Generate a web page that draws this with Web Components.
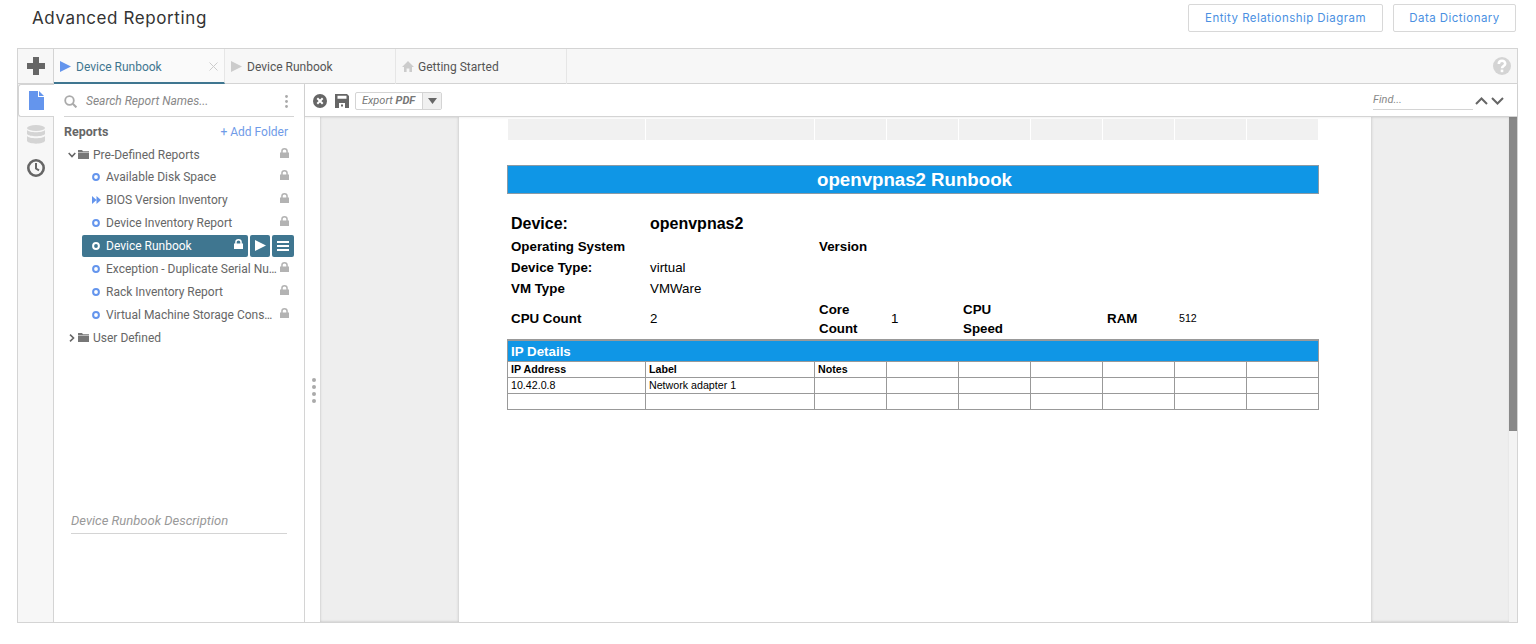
<!DOCTYPE html>
<html>
<head>
<meta charset="utf-8">
<title>Advanced Reporting</title>
<style>
html, body { margin: 0; height: 100%; background: #fff; overflow: hidden; }
body { font-family: Roboto, "Liberation Sans", sans-serif; }
</style>
</head>
<body>
<app-header></app-header>
<report-frame></report-frame>

<script>
const ICONS = {
    plus: '<svg width="20" height="20" viewBox="0 0 20 20"><path fill="#666" d="M7 1h6v6h6v6h-6v6H7v-6H1V7h6z"/></svg>',
    play: c => `<svg width="11" height="11" viewBox="0 0 11 11"><path fill="${c}" d="M0 0l11 5.500L0 11z"/></svg>`,
    home: '<svg width="12" height="11" viewBox="0 0 12 11"><path fill="#ccc" d="M6 0l6 6h-2v5H7.400V7.500H4.600V11H2V6H0z"/></svg>',
    close: '<svg width="9" height="9" viewBox="0 0 9 9"><path stroke="#ccc" stroke-width="1" fill="none" d="M.5.5l8 8M8.500.5l-8 8"/></svg>',
    help: '<svg width="18" height="18" viewBox="0 0 18 18"><circle cx="9" cy="9" r="9" fill="#d4d4d4"/><path fill="none" stroke="#fff" stroke-width="2.600" d="M5.800 7c0-4.200 6.400-4.200 6.400-.3 0 2.300-3.200 2.300-3.200 4.500"/><rect x="7.700" y="12.600" width="2.600" height="2.600" fill="#fff"/></svg>',
    file: '<svg width="15" height="19" viewBox="0 0 15 19"><path fill="#6495ed" d="M0 0h9v6h6v13H0z"/><path fill="#6495ed" d="M10 0l5 5h-5z"/></svg>',
    db: '<svg width="18" height="19" viewBox="0 0 18 19"><g fill="#d4d4d4"><ellipse cx="9" cy="3" rx="9" ry="3"/><path d="M0 5c2 3 16 3 18 0v4c-2 3-16 3-18 0z"/><path d="M0 11c2 3 16 3 18 0v5c-2 3.500-16 3.500-18 0z"/></g></svg>',
    clock: '<svg width="18" height="18" viewBox="0 0 18 18"><circle cx="9" cy="9" r="7.700" fill="none" stroke="#666" stroke-width="2.600"/><path fill="none" stroke="#666" stroke-width="2" d="M9 4v5.500l3 1.800"/></svg>',
    search: '<svg width="13" height="13" viewBox="0 0 13 13"><circle cx="5.500" cy="5.500" r="4.300" fill="none" stroke="#aaa" stroke-width="1.800"/><path stroke="#aaa" stroke-width="2" d="M8.800 8.800l3.600 3.600"/></svg>',
    dots: '<svg width="3" height="13" viewBox="0 0 3 13"><g fill="#aaa"><circle cx="1.500" cy="1.500" r="1.400"/><circle cx="1.500" cy="6.500" r="1.400"/><circle cx="1.500" cy="11.500" r="1.400"/></g></svg>',
    lock: c => `<svg width="9" height="10" viewBox="0 0 9 10"><path fill="${c}" d="M0 4.500h1.200V3a3.300 3 0 0 1 6.600 0v1.500H9V10H0zM2.700 4.500h3.600V3a1.800 1.600 0 0 0-3.600 0z"/></svg>`,
    folder: '<svg width="11" height="9" viewBox="0 0 11 9"><path fill="#777" d="M0 0h4l1 1.200h6V2.400H0zM0 3h11v6H0z"/></svg>',
    down: '<svg width="8" height="6" viewBox="0 0 8 6"><path fill="none" stroke="#666" stroke-width="1.600" d="M.7 1l3.300 3.500L7.300 1"/></svg>',
    right: '<svg width="6" height="8" viewBox="0 0 6 8"><path fill="none" stroke="#666" stroke-width="1.600" d="M1 .7l3.500 3.300L1 7.300"/></svg>',
    ring: c => `<svg width="8" height="8" viewBox="0 0 8 8"><circle cx="4" cy="4" r="2.900" fill="none" stroke="${c}" stroke-width="2"/></svg>`,
    ffwd: '<svg width="9" height="8" viewBox="0 0 9 8"><path fill="#6495ed" d="M0 0l4.500 4L0 8zM4.500 0L9 4 4.500 8z"/></svg>',
    menu: '<svg width="12" height="10" viewBox="0 0 12 10"><path fill="#fff" d="M0 0h12v2H0zM0 4h12v2H0zM0 8h12v2H0z"/></svg>',
    cancel: '<svg width="14" height="14" viewBox="0 0 14 14"><circle cx="7" cy="7" r="7" fill="#666"/><path stroke="#fff" stroke-width="2" d="M4.300 4.300l5.400 5.400M9.700 4.300l-5.400 5.400"/></svg>',
    save: '<svg width="14" height="14" viewBox="0 0 14 14"><path fill="#666" fill-rule="evenodd" d="M0 0h12l2 2v12H0zM2.500 1.800v3h9v-3zM4 9v5h6V9z"/><rect x="6" y="10.500" width="2" height="2" fill="#666"/></svg>',
    caret: '<svg width="9" height="6" viewBox="0 0 9 6"><path fill="#666" d="M0 0h9L4.500 6z"/></svg>',
    up2: '<svg width="13" height="8" viewBox="0 0 13 8"><path fill="none" stroke="#666" stroke-width="2" d="M1 7l5.500-5.500L12 7"/></svg>',
    down2: '<svg width="13" height="8" viewBox="0 0 13 8"><path fill="none" stroke="#666" stroke-width="2" d="M1 1l5.500 5.500L12 1"/></svg>'
};

// Page title and the two link buttons
class AppHeader extends HTMLElement {
    constructor() {
        super();
        this.attachShadow({ mode: 'open' });
        this.shadowRoot.innerHTML = `
            <style>
            :host { display: flex; align-items: flex-start; justify-content: space-between; height: 48px; box-sizing: border-box; padding: 4px 20px 0 32px; }
            h1 { margin: 0; font: 400 17px/28px Inter, sans-serif; letter-spacing: .6px; color: #333; }
            .btns { display: flex; gap: 10px; }
            a { box-sizing: border-box; height: 28px; border: 1px solid #d8d8d8; border-radius: 2px; font: 400 11.500px/26px Inter, sans-serif; letter-spacing: .45px; color: #4a90e2; text-align: center; }
            .erd { width: 195px; }
            .dict { width: 123px; }
            </style>
            <h1>Advanced Reporting</h1>
            <div class="btns"><a class="erd">Entity Relationship Diagram</a><a class="dict">Data Dictionary</a></div>
        `;
    }
}
customElements.define('app-header', AppHeader);

class TabItem extends HTMLElement {
    constructor() {
        super();
        this.attachShadow({ mode: 'open' });
        const active = this.hasAttribute('active');
        const home = this.getAttribute('icon') === 'home';
        const icon = home ? ICONS.home : ICONS.play(active ? '#6495ed' : '#ccc');
        this.shadowRoot.innerHTML = `
            <style>
            :host { display: flex; align-items: center; gap: ${home ? 4 : 5}px; box-sizing: border-box; width: 171px; height: 35px; padding: 0 6px; border-right: 1px solid #e6e6e6; font-size: 12px; color: #555; }
            :host([active]) { color: #3f7690; border-bottom: 2px solid #3f7690; background: #fafafa; padding-top: 2px; }
            svg { flex: none; }
            .t { flex: 1; }
            </style>
            ${icon}<span class="t"><slot></slot></span>${active ? ICONS.close : ''}
        `;
    }
}
customElements.define('tab-item', TabItem);

class TabBar extends HTMLElement {
    constructor() {
        super();
        this.attachShadow({ mode: 'open' });
        this.shadowRoot.innerHTML = `
            <style>
            :host { display: flex; align-items: stretch; height: 35px; box-sizing: border-box; background: #f7f7f7; border-bottom: 1px solid #d4d4d4; }
            .add { width: 36px; box-sizing: border-box; border-right: 1px solid #d4d4d4; display: flex; align-items: center; justify-content: center; }
            .tabs { flex: 1; display: flex; }
            .help { display: flex; align-items: center; padding-right: 6px; }
            </style>
            <div class="add">${ICONS.plus}</div>
            <div class="tabs"><slot></slot></div>
            <div class="help">${ICONS.help}</div>
        `;
    }
}
customElements.define('tab-bar', TabBar);

class SideRail extends HTMLElement {
    constructor() {
        super();
        this.attachShadow({ mode: 'open' });
        this.shadowRoot.innerHTML = `
            <style>
            :host { display: block; width: 36px; box-sizing: border-box; background: #f7f7f7; border-right: 1px solid #d4d4d4; flex: none; }
            .item { height: 33px; display: flex; align-items: center; justify-content: center; }
            .on { background: #fff; width: 36px; border: 1px solid #d4d4d4; border-right: 0; border-radius: 3px 0 0 3px; box-sizing: border-box; position: relative; z-index: 1; margin-bottom: 1px; }
            </style>
            <div class="item on">${ICONS.file}</div>
            <div class="item">${ICONS.db}</div>
            <div class="item">${ICONS.clock}</div>
        `;
    }
}
customElements.define('side-rail', SideRail);

class TreeFolder extends HTMLElement {
    constructor() {
        super();
        this.attachShadow({ mode: 'open' });
        const open = this.hasAttribute('open');
        this.shadowRoot.innerHTML = `
            <style>
            :host { display: block; }
            .row { display: flex; align-items: center; height: 23px; padding-left: 3px; font-size: 12px; color: #666; }
            :host([open]) .row { height: 21px; }
            .tw { width: 9px; display: flex; justify-content: center; }
            .fd { margin: 0 4px 0 2px; display: flex; }
            .n { flex: 1; }
            .lk { display: flex; padding-right: 15px; margin-top: -3px; }
            </style>
            <div class="row">
                <span class="tw">${open ? ICONS.down : ICONS.right}</span>
                <span class="fd">${ICONS.folder}</span>
                <span class="n">${this.getAttribute('name')}</span>
                ${this.hasAttribute('locked') ? `<span class="lk">${ICONS.lock('#b3b3b3')}</span>` : ''}
            </div>
            <slot></slot>
        `;
    }
}
customElements.define('tree-folder', TreeFolder);

class TreeItem extends HTMLElement {
    constructor() {
        super();
        this.attachShadow({ mode: 'open' });
        const sel = this.hasAttribute('selected');
        const icon = this.getAttribute('icon') === 'ffwd' ? ICONS.ffwd : ICONS.ring(sel ? '#fff' : '#6495ed');
        this.shadowRoot.innerHTML = `
            <style>
            :host { display: flex; align-items: center; height: 23px; margin-left: 18px; font-size: 12px; color: #666; }
            .main { flex: 1; min-width: 0; height: 22px; display: flex; align-items: center; padding-left: 10px; box-sizing: border-box; border-radius: 2px; }
            .ic { width: 10px; flex: none; display: flex; margin-right: 4px; }
            .n { flex: 1; min-width: 0; white-space: nowrap; overflow: hidden; text-overflow: ellipsis; }
            .lk { flex: none; display: flex; width: 27px; padding-left: 3px; box-sizing: border-box; margin-top: -3px; }
            .act { display: none; }
            :host([selected]) { color: #fff; }
            :host([selected]) .main { background: #3f7690; }
            :host([selected]) .lk { width: 16px; padding-left: 2px; }
            :host([selected]) .act { display: flex; gap: 2px; margin-left: 2px; margin-right: 10px; }
            .b { width: 20px; height: 22px; background: #3f7690; border-radius: 2px; display: flex; align-items: center; justify-content: center; }
            .b + .b { width: 22px; }
            </style>
            <div class="main">
                <span class="ic">${icon}</span>
                <span class="n"><slot></slot></span>
                <span class="lk">${ICONS.lock(sel ? '#fff' : '#b3b3b3')}</span>
            </div>
            <div class="act"><span class="b">${ICONS.play('#fff')}</span><span class="b">${ICONS.menu}</span></div>
        `;
    }
}
customElements.define('tree-item', TreeItem);

class ReportTree extends HTMLElement {
    constructor() {
        super();
        this.attachShadow({ mode: 'open' });
        this.shadowRoot.innerHTML = `
            <style>
            :host { display: flex; flex-direction: column; width: 251px; box-sizing: border-box; border-right: 1px solid #d4d4d4; flex: none; background: #fff; }
            .search { display: flex; align-items: center; height: 33px; box-sizing: border-box; margin: 0 10px; padding-top: 2px; border-bottom: 1px solid #d4d4d4; }
            .search i { flex: 1; font-size: 12px; color: #888; padding-left: 9px; }
            .search svg:last-child { margin-right: 6px; }
            .head { display: flex; justify-content: space-between; align-items: center; height: 28px; margin: 0 16px 0 10px; }
            b { font-size: 12.500px; font-weight: 700; color: #666; }
            .add { font-size: 12px; color: #6f9be8; padding-top: 1px; }
            .tree { flex: 1; padding-left: 10px; margin-top: -1px; }
            .desc { margin: 0 17px 88px; height: 25px; box-sizing: border-box; border-bottom: 1px solid #d4d4d4; font: italic 13px/24px Roboto, sans-serif; color: #999; }
            </style>
            <div class="search">${ICONS.search}<i>Search Report Names...</i>${ICONS.dots}</div>
            <div class="head"><b>Reports</b><span class="add">+ Add Folder</span></div>
            <div class="tree"><slot></slot></div>
            <div class="desc">Device Runbook Description</div>
        `;
    }
}
customElements.define('report-tree', ReportTree);

class DocToolbar extends HTMLElement {
    constructor() {
        super();
        this.attachShadow({ mode: 'open' });
        this.shadowRoot.innerHTML = `
            <style>
            :host { display: flex; align-items: center; height: 33px; box-sizing: border-box; border-bottom: 1px solid #d4d4d4; padding: 2px 0 0 8px; gap: 8px; background: #fff; box-shadow: 0 1px 2px rgba(0,0,0,.06); position: relative; z-index: 1; }
            svg { flex: none; }
            .export { display: flex; height: 18px; box-sizing: border-box; border: 1px solid #d4d4d4; border-radius: 2px; margin-left: -2px; font: italic 11px/16px Roboto, sans-serif; color: #777; }
            .export span { padding: 0 0 0 6px; width: 66px; box-sizing: border-box; white-space: nowrap; }
            .export em { width: 18px; background: #f0f0f0; border-left: 1px solid #d4d4d4; display: flex; align-items: center; justify-content: center; }
            .sp { flex: 1; }
            .find { width: 100px; box-sizing: border-box; height: 17px; border-bottom: 1px solid #d4d4d4; font: italic 11px/13px Roboto, sans-serif; color: #888; margin-right: -6px; }
            .nav { display: flex; gap: 3px; padding-right: 13px; }
            </style>
            ${ICONS.cancel}${ICONS.save}
            <div class="export"><span>Export <b>PDF</b></span><em>${ICONS.caret}</em></div>
            <div class="sp"></div>
            <div class="find">Find...</div>
            <div class="nav">${ICONS.up2}${ICONS.down2}</div>
        `;
    }
}
customElements.define('doc-toolbar', DocToolbar);

// The rendered report: a fixed column grid inside a white sheet
class ReportPage extends HTMLElement {
    constructor() {
        super();
        this.attachShadow({ mode: 'open' });
        const blank = n => Array.from({ length: n }, () => '<div></div>').join('');
        this.shadowRoot.innerHTML = `
            <style>
            :host { display: block; flex: 1; min-width: 0; background: #eee; position: relative; overflow: hidden; box-shadow: inset 0 -1px 2px rgba(0,0,0,.08), inset 1px 0 2px rgba(0,0,0,.08); font-family: "Liberation Sans", Arial, sans-serif; color: #000; }
            .sheet { width: 912px; height: 100%; margin-left: 139px; background: #fff; box-shadow: 0 0 3px rgba(0,0,0,.22); padding: 2px 0 0 48px; box-sizing: border-box; }
            .grey { display: grid; grid-template-columns: 138px 169px repeat(7, 72px); width: 811px; margin-left: 1px; height: 21px; }
            .grey div { background: #f1f1f1; border-right: 1px solid #fff; }
            h2 { margin: 25px 0 0; width: 812px; box-sizing: border-box; height: 29px; padding-left: 3px; background: #0f96e6; border: 1px solid #8a9aa5; color: #fff; font: 700 18.670px/27px "Liberation Sans", sans-serif; text-align: center; }
            .info { display: grid; grid-template-columns: 139px 169px 72px 72px 72px 72px 72px 72px; width: 812px; margin-top: 18px; padding-left: 4px; box-sizing: border-box; font-size: 13.330px; align-items: center; }
            .info > div { white-space: nowrap; }
            .b { font-weight: 700; }
            .lg { font-size: 16px; font-weight: 700; }
            .r1 { height: 24px; margin-top: 3px; }
            .r2 { height: 21px; }
            .r3 { height: 18px; }
            .wrap { line-height: 19px; padding-top: 1px; margin-bottom: -1px; }
            .s { font-size: 10.670px; }
            .tbl { width: 812px; box-sizing: border-box; margin-top: 2px; border: 1px solid #999; border-top: 2px solid #999; }
            .tbl .hd { height: 20px; background: #0f96e6; color: #fff; font: 700 13.330px/22px "Liberation Sans", sans-serif; padding-left: 3px; }
            .rw { display: grid; grid-template-columns: 138px 169px repeat(7, 72px); height: 16px; border-top: 1px solid #999; box-sizing: border-box; font-size: 10.670px; line-height: 15px; }
            .rw div { border-right: 1px solid #999; padding-left: 3px; min-width: 0; box-sizing: border-box; }
            .rw div:last-child { border-right: 0; }
            </style>
            <div class="sheet">
                <div class="grey">${blank(9)}</div>
                <h2>openvpnas2 Runbook</h2>
                <div class="info">
                    <div class="lg r1">Device:</div><div class="lg r1">openvpnas2</div>${blank(6)}
                    <div class="b r2">Operating System</div><div></div><div class="b r2">Version</div>${blank(5)}
                    <div class="r2 b">Device Type:</div><div class="r2">virtual</div>${blank(6)}
                    <div class="b r3">VM Type</div><div class="r3">VMWare</div>${blank(6)}
                    <div class="b">CPU Count</div><div>2</div><div class="b wrap">Core<br>Count</div><div>1</div><div class="b wrap">CPU<br>Speed</div><div></div><div class="b">RAM</div><div class="s">512</div>
                </div>
                <div class="tbl">
                    <div class="hd">IP Details</div>
                    <div class="rw b"><div>IP Address</div><div>Label</div><div>Notes</div>${blank(6)}</div>
                    <div class="rw"><div>10.42.0.8</div><div>Network adapter 1</div>${blank(7)}</div>
                    <div class="rw">${blank(9)}</div>
                </div>
            </div>
        `;
    }
}
customElements.define('report-page', ReportPage);

// Outer bordered frame: tabs on top, rail + tree + document below
class ReportFrame extends HTMLElement {
    constructor() {
        super();
        this.attachShadow({ mode: 'open' });
        this.shadowRoot.innerHTML = `
            <style>
            :host { display: flex; flex-direction: column; box-sizing: border-box; width: 1501px; height: 575px; margin-left: 17px; border: 1px solid #d4d4d4; background: #fff; }
            .body { flex: 1; display: flex; min-height: 0; }
            .doc { flex: 1; min-width: 0; display: flex; flex-direction: column; }
            .view { flex: 1; min-height: 0; display: flex; }
            .grip { width: 15px; flex: none; display: flex; flex-direction: column; align-items: center; padding: 261px 0 0 3px; box-sizing: border-box; gap: 3px; }
            .grip i { width: 4px; height: 4px; border-radius: 50%; background: #aaa; }
            .bar { width: 8px; flex: none; background: #f3f3f3; }
            .bar div { height: 314px; background: #888; }
            </style>
            <tab-bar>
                <tab-item active>Device Runbook</tab-item>
                <tab-item>Device Runbook</tab-item>
                <tab-item icon="home">Getting Started</tab-item>
            </tab-bar>
            <div class="body">
                <side-rail></side-rail>
                <report-tree>
                    <tree-folder name="Pre-Defined Reports" open locked>
                        <tree-item>Available Disk Space</tree-item>
                        <tree-item icon="ffwd">BIOS Version Inventory</tree-item>
                        <tree-item>Device Inventory Report</tree-item>
                        <tree-item selected>Device Runbook</tree-item>
                        <tree-item>Exception - Duplicate Serial Number</tree-item>
                        <tree-item>Rack Inventory Report</tree-item>
                        <tree-item>Virtual Machine Storage Consumption</tree-item>
                    </tree-folder>
                    <tree-folder name="User Defined"></tree-folder>
                </report-tree>
                <div class="doc">
                    <doc-toolbar></doc-toolbar>
                    <div class="view">
                        <div class="grip"><i></i><i></i><i></i><i></i></div>
                        <report-page></report-page>
                        <div class="bar"><div></div></div>
                    </div>
                </div>
            </div>
        `;
    }
}
customElements.define('report-frame', ReportFrame);
</script>
</body>
</html>
